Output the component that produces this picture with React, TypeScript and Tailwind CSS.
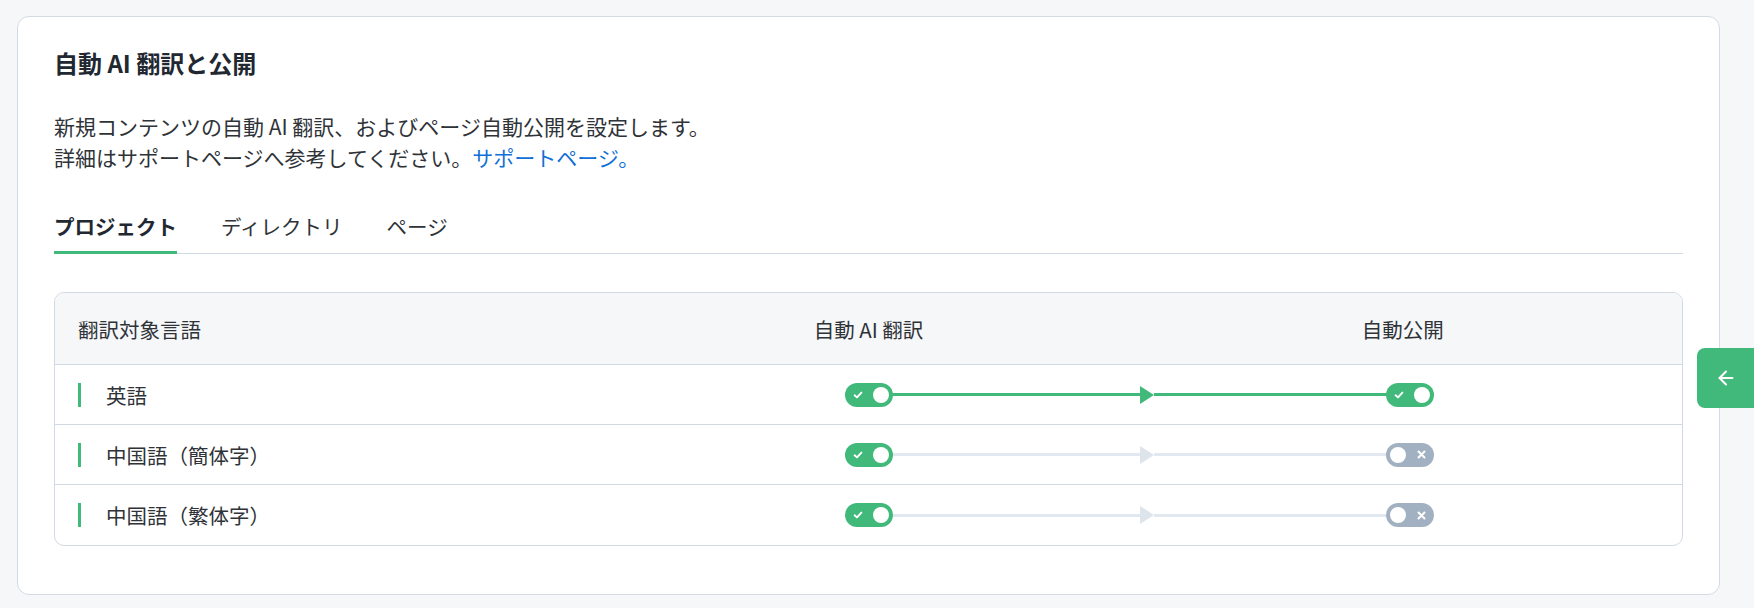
import React from 'react';
import { ArrowLeft } from 'lucide-react';

const FONT = { fontFamily: '"Noto Sans CJK JP", "Noto Sans", sans-serif' };

const languages = [
    { name: '英語', translate: true, publish: true },
    { name: '中国語（簡体字）', translate: true, publish: false },
    { name: '中国語（繁体字）', translate: true, publish: false },
];

const Toggle: React.FC<{ on: boolean }> = ({ on }) => (
    <div
        className={`relative flex items-center w-[48px] h-[24px] rounded-full shrink-0 ${on ? 'bg-[#40b97b]' : 'bg-[#a1b1c1]'}`}
    >
        {on ? (
            <>
                <svg className="absolute left-[8px]" width="10" height="10" viewBox="0 0 10 10">
                    <path d="M1.6 5.3 L4 7.4 L8.4 2.6" fill="none" stroke="#fff" strokeWidth="1.9" strokeLinecap="round" strokeLinejoin="round" />
                </svg>
                <span className="absolute right-[4px] w-[16px] h-[16px] rounded-full bg-white"></span>
            </>
        ) : (
            <>
                <span className="absolute left-[4px] w-[16px] h-[16px] rounded-full bg-white"></span>
                <svg className="absolute right-[8px]" width="9" height="9" viewBox="0 0 9 9">
                    <path d="M1.5 1.5 L7.5 7.5 M7.5 1.5 L1.5 7.5" fill="none" stroke="#fff" strokeWidth="2" strokeLinecap="round" />
                </svg>
            </>
        )}
    </div>
);

const Connector: React.FC<{ active: boolean }> = ({ active }) => {
    const line = active ? 'bg-[#40b97b]' : 'bg-[#e2e8f0]';
    return (
        <div className="col-span-2 flex items-center px-[248px]">
            <Toggle on={true} />
            <div className={`flex-1 h-[3px] ${line}`}></div>
            <div className="flex-1 flex items-center">
                <svg width="14" height="18" viewBox="0 0 14 18" className="shrink-0">
                    <polygon points="0,0 14,9 0,18" fill={active ? '#40b97b' : '#dde4ec'} />
                </svg>
                <div className={`flex-1 h-[3px] ${line}`}></div>
            </div>
            <Toggle on={active} />
        </div>
    );
};

const App: React.FC = () => {
    return (
        <div className="relative min-h-[608px] bg-[#f6f7f9] pl-[17px] pr-[34px] pt-[16px] pb-[14px]" style={FONT}>
            <div className="bg-white border border-[#d4dbe4] rounded-[12px] pt-[30px] pb-[48px] px-[36px]">
                <h1 className="text-[24px] leading-[32px] font-bold text-[#222831]">自動 AI 翻訳と公開</h1>

                <p className="mt-[32px] text-[21px] leading-[31px] text-[#2f3338]">
                    新規コンテンツの自動 AI 翻訳、およびページ自動公開を設定します。
                    <br />
                    詳細はサポートページへ参考してください。<span className="text-[#1170d6]">サポートページ。</span>
                </p>

                <div className="mt-[39px] flex gap-[44px] border-b border-[#d1d9e2]">
                    <div className="-mb-px pb-[11px] border-b-[3px] border-[#40b97b] text-[20.5px] leading-[28px] font-semibold text-[#222831]">
                        プロジェクト
                    </div>
                    <div className="-mb-px pb-[11px] border-b-[3px] border-transparent text-[20.5px] leading-[28px] text-[#2f3338]">
                        ディレクトリ
                    </div>
                    <div className="-mb-px pb-[11px] border-b-[3px] border-transparent text-[20.5px] leading-[28px] text-[#2f3338]">
                        ページ
                    </div>
                </div>

                {/* language table */}
                <div className="mt-[38px] border border-[#d1d9e2] rounded-[10px] overflow-hidden text-[20.5px] leading-[28px] text-[#2f3338]">
                    <div className="grid grid-cols-3 h-[72px] items-center bg-[#f6f7f9] border-b border-[#d1d9e2]">
                        <div className="pl-[23px]">翻訳対象言語</div>
                        <div className="text-center">自動 AI 翻訳</div>
                        <div className="text-center pr-[16px]">自動公開</div>
                    </div>
                    {languages.map((lang, i) => (
                        <div
                            key={lang.name}
                            className={`grid grid-cols-3 items-center ${i < languages.length - 1 ? 'h-[60px] border-b border-[#d1d9e2]' : 'h-[60px]'}`}
                        >
                            <div className="flex items-center gap-[25px] pl-[23px]">
                                <span className="w-[3px] h-[24px] bg-[#40b97b]"></span>
                                <span>{lang.name}</span>
                            </div>
                            <Connector active={lang.publish} />
                        </div>
                    ))}
                </div>
            </div>

            <button className="absolute right-0 top-[348px] w-[57px] h-[60px] rounded-l-[8px] bg-[#40b97b] flex items-center justify-center text-white">
                <ArrowLeft size={22} strokeWidth={2.25} />
            </button>
        </div>
    );
};

export default App;
